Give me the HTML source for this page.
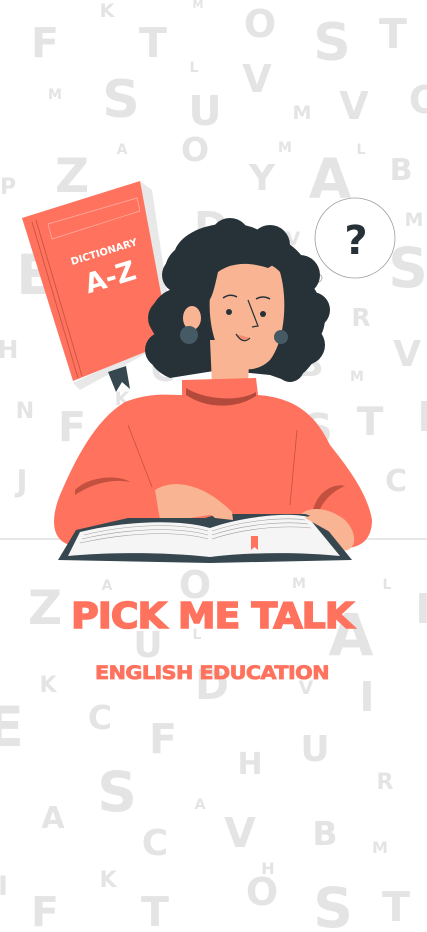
<!DOCTYPE html>
<html><head><meta charset="utf-8"><style>
html,body{margin:0;padding:0;background:#fff;width:427px;height:932px;overflow:hidden}
svg{display:block}
.l{font-family:"DejaVu Sans","Liberation Sans",sans-serif;font-weight:bold;fill:#e4e4e4;text-anchor:middle}
.t{font-family:"DejaVu Sans","Liberation Sans",sans-serif;font-weight:bold;fill:#ff725e;text-anchor:middle}
</style></head><body>
<svg width="427" height="932" viewBox="0 0 427 932" xmlns="http://www.w3.org/2000/svg">
<g class="l">
<text x="107" y="17" font-size="19">K</text>
<text x="198" y="8" font-size="11">M</text>
<text x="260" y="37" font-size="38">O</text>
<text x="45" y="57" font-size="41">F</text>
<text x="153" y="57" font-size="41">T</text>
<text x="332" y="60" font-size="52">S</text>
<text x="393" y="48" font-size="41">T</text>
<text x="194" y="72" font-size="14">L</text>
<text x="257" y="92" font-size="38">V</text>
<text x="55" y="99" font-size="14">M</text>
<text x="121" y="117" font-size="52">S</text>
<text x="205" y="125" font-size="41">U</text>
<text x="302" y="119" font-size="19">M</text>
<text x="354" y="119" font-size="38">V</text>
<text x="425" y="113" font-size="38">O</text>
<text x="122" y="154" font-size="14">A</text>
<text x="195" y="161" font-size="33">O</text>
<text x="285" y="152" font-size="14">M</text>
<text x="361" y="154" font-size="14">L</text>
<text x="8" y="194" font-size="22">P</text>
<text x="72" y="192" font-size="47">Z</text>
<text x="262" y="190" font-size="36">Y</text>
<text x="330" y="198" font-size="55">A</text>
<text x="401" y="180" font-size="30">B</text>
<text x="414" y="226" font-size="19">M</text>
<text x="211" y="241" font-size="41">D</text>
<text x="293" y="245" font-size="19">V</text>
<text x="35" y="294" font-size="55">E</text>
<text x="408" y="287" font-size="55">S</text>
<text x="361" y="326" font-size="25">R</text>
<text x="8" y="358" font-size="25">H</text>
<text x="407" y="366" font-size="36">V</text>
<text x="357" y="381" font-size="14">M</text>
<text x="310" y="376" font-size="36">B</text>
<text x="163" y="381" font-size="33">C</text>
<text x="122" y="405" font-size="19">K</text>
<text x="25" y="418" font-size="22">N</text>
<text x="72" y="441" font-size="41">F</text>
<text x="318" y="443" font-size="41">S</text>
<text x="370" y="435" font-size="39">T</text>
<text x="425" y="431" font-size="41">I</text>
<text x="22" y="491" font-size="30">J</text>
<text x="396" y="491" font-size="30">C</text>
<text x="107" y="590" font-size="14">A</text>
<text x="195" y="598" font-size="38">O</text>
<text x="299" y="588" font-size="14">M</text>
<text x="387" y="589" font-size="14">L</text>
<text x="45" y="624" font-size="47">Z</text>
<text x="197" y="639" font-size="14">L</text>
<text x="351" y="655" font-size="58">A</text>
<text x="423" y="623" font-size="41">I</text>
<text x="148" y="657" font-size="36">U</text>
<text x="48" y="692" font-size="22">K</text>
<text x="212" y="699" font-size="41">D</text>
<text x="306" y="694" font-size="19">V</text>
<text x="367" y="711" font-size="41">I</text>
<text x="100" y="729" font-size="33">C</text>
<text x="5" y="746" font-size="55">E</text>
<text x="163" y="753" font-size="41">F</text>
<text x="315" y="761" font-size="36">U</text>
<text x="250" y="774" font-size="30">H</text>
<text x="385" y="789" font-size="22">R</text>
<text x="117" y="811" font-size="55">S</text>
<text x="200" y="809" font-size="14">A</text>
<text x="53" y="828" font-size="30">A</text>
<text x="240" y="847" font-size="41">V</text>
<text x="325" y="845" font-size="33">B</text>
<text x="155" y="855" font-size="36">C</text>
<text x="380" y="853" font-size="16">M</text>
<text x="268" y="874" font-size="16">H</text>
<text x="108" y="887" font-size="22">K</text>
<text x="262" y="905" font-size="38">O</text>
<text x="45" y="926" font-size="41">F</text>
<text x="155" y="926" font-size="41">T</text>
<text x="333" y="927" font-size="55">S</text>
<text x="396" y="921" font-size="41">T</text>
<text x="3" y="895" font-size="27">I</text>
</g>

<line x1="0" y1="539" x2="427" y2="539" stroke="#cfcfcf" stroke-width="1"/>

<circle cx="355" cy="238" r="40" fill="#fff" stroke="#9e9e9e" stroke-width="0.8"/>
<circle cx="318" cy="278" r="4" fill="#fff" stroke="#9e9e9e" stroke-width="0.8"/>
<text x="356" y="254" font-family="DejaVu Sans,sans-serif" font-weight="bold" font-size="40" fill="#263238" text-anchor="middle">?</text>

<g>
<polygon points="140,181 152,190 174,338 160,342" fill="#e8e8e8"/>
<polygon points="160,342 174,338 80,390 73,383" fill="#e8e8e8"/>
<polygon points="22,218 140,181 170,342 73,381" fill="#ff725e"/>
<line x1="32" y1="222" x2="78" y2="378" stroke="#c4513f" stroke-width="0.8"/>
<line x1="36" y1="220" x2="82" y2="376" stroke="#c4513f" stroke-width="0.8"/>
<polygon points="48,224 137,198 140,211 52,239" fill="none" stroke="#ffb3a6" stroke-width="0.7"/>
<text x="105" y="255" font-family="DejaVu Sans,sans-serif" font-weight="bold" font-size="10" fill="#fff" text-anchor="middle" transform="rotate(-17 105 255)">DICTIONARY</text>
<text x="113" y="286" font-family="DejaVu Sans,sans-serif" font-weight="bold" font-size="27" fill="#fff" text-anchor="middle" transform="rotate(-17 113 286)">A-Z</text>
<polygon points="108,372 126,366 130,389 122,382 116,392" fill="#37474f"/>
</g>

<!-- hair back with curls -->
<g fill="#263238">
<path d="M175,250 C185,225 235,215 262,232 C290,240 310,255 312,285 C322,300 332,320 318,340 C322,360 300,378 290,382 L270,375 L220,370 L170,378 C150,370 140,350 155,335 C142,318 155,295 170,290 C160,275 165,258 175,250 Z"/>
<circle cx="230" cy="238" r="20"/>
<circle cx="270" cy="245" r="20"/>
<circle cx="300" cy="275" r="20"/>
<circle cx="312" cy="310" r="18"/>
<circle cx="305" cy="345" r="20"/>
<circle cx="290" cy="368" r="14"/>
<circle cx="168" cy="318" r="20"/>
<circle cx="163" cy="350" r="18"/>
<circle cx="180" cy="275" r="18"/>
<circle cx="205" cy="248" r="18"/>
</g>
<path d="M210,340 L250,340 L248,385 L212,385 Z" fill="#f9b593"/>
<path d="M215,268 C225,255 265,255 280,272 C288,300 285,340 270,360 C258,372 240,372 228,362 C214,350 208,320 210,295 Z" fill="#f9b593"/>
<path d="M200,250 C215,232 255,230 275,245 C285,252 280,262 268,268 C250,262 232,262 218,272 C214,290 212,300 205,305 C198,290 195,265 200,250 Z" fill="#263238"/>
<ellipse cx="192" cy="318" rx="9" ry="12" fill="#f9b593"/>
<circle cx="189" cy="335" r="9" fill="#455a64"/>
<circle cx="281" cy="337" r="7" fill="#455a64"/>
<circle cx="229" cy="312" r="3" fill="#263238"/>
<circle cx="263" cy="314" r="3" fill="#263238"/>
<path d="M223,298 Q230,293 237,297" stroke="#263238" stroke-width="1.5" fill="none"/>
<path d="M256,299 Q263,295 270,299" stroke="#263238" stroke-width="1.5" fill="none"/>
<path d="M248,300 L258,326 L252,327" stroke="#263238" stroke-width="1.2" fill="none"/>
<path d="M236,334 Q243,345 250,338" stroke="#263238" stroke-width="1.2" fill="#f28b70"/>

<path d="M182,380 L256,378 L258,395 C300,398 318,420 330,445 C350,470 368,495 372,520 C372,540 360,548 345,548 L300,548 L300,520 L150,520 L150,540 L70,545 C52,540 50,520 60,495 C75,460 95,420 125,402 C150,392 170,395 182,395 Z" fill="#ff725e"/>
<path d="M186,388 C205,400 240,402 256,392 L256,396 C235,410 205,408 186,395 Z" fill="#b34a3b"/>
<path d="M75,490 C90,475 120,475 130,482 C110,478 90,485 75,495 Z" fill="#c4513f"/>
<path d="M313,510 C318,490 335,483 345,486 C335,490 322,500 318,515 Z" fill="#c4513f"/>
<line x1="128" y1="425" x2="152" y2="487" stroke="#c4513f" stroke-width="0.8"/>
<line x1="297" y1="430" x2="290" y2="505" stroke="#c4513f" stroke-width="0.8"/>

<path d="M155,490 C170,480 200,480 232,512 L228,520 L210,515 L190,518 L160,520 Z" fill="#f9b593"/>
<path d="M300,515 C310,505 330,508 345,520 C355,530 358,545 348,550 C335,553 318,545 305,535 Z" fill="#f9b593"/>

<path d="M58,560 L76,530 L128,518 L205,518 L215,515 L225,515 L232,514 L305,514 L318,518 L352,560 L210,563 Z" fill="#37474f"/>
<path d="M68,556 L80,532 C120,522 175,518 210,528 L210,557 C165,552 110,552 68,556 Z" fill="#f5f5f5"/>
<path d="M210,528 C245,516 290,512 308,517 L340,556 C300,552 250,552 210,557 Z" fill="#f5f5f5"/>
<g stroke="#9e9e9e" stroke-width="0.6" fill="none">
<path d="M84,535 C125,525 175,522 208,531"/>
<path d="M82,539 C125,529 175,526 208,535"/>
<path d="M80,543 C125,533 175,530 208,539"/>
<path d="M212,531 C245,520 285,517 305,520"/>
<path d="M212,535 C245,524 285,521 308,524"/>
<path d="M212,539 C245,528 285,525 311,528"/>
</g>
<polygon points="251,536 258,536 258,550 254.5,547 251,550" fill="#ff725e"/>
<path d="M200,505 L232,512 L233,520 L215,518 Z" fill="#f9b593"/>
<path d="M305,518 C315,512 330,515 338,525 L330,532 Z" fill="#f9b593"/>

<text class="t" x="212" y="628" font-size="36" letter-spacing="-1" textLength="282" lengthAdjust="spacingAndGlyphs" stroke="#ff725e" stroke-width="1.5">PICK ME TALK</text>
<text class="t" x="212" y="679" font-size="19" letter-spacing="-0.5" textLength="234" lengthAdjust="spacingAndGlyphs" stroke="#ff725e" stroke-width="0.8">ENGLISH EDUCATION</text>
</svg>
</body></html>
